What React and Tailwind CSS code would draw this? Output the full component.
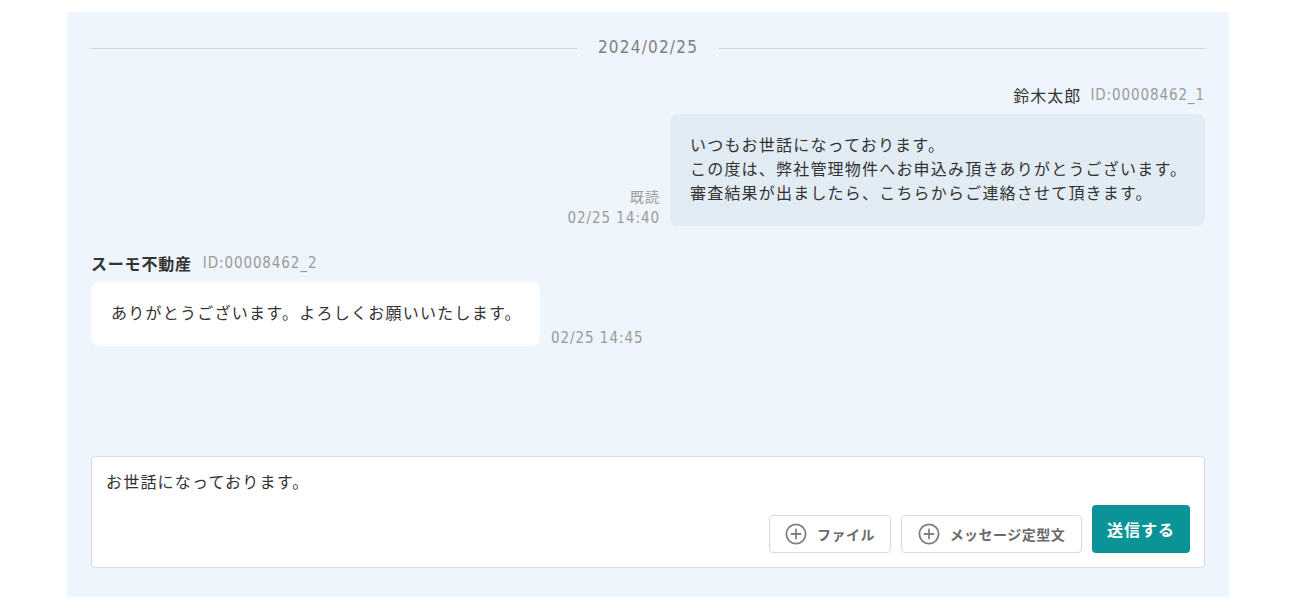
import React from 'react';

const PlusCircle = () => (
  <svg width="22" height="22" viewBox="0 0 22 22" fill="none" stroke="#808080" strokeWidth="1.8">
    <circle cx="11" cy="11" r="9.6" />
    <path d="M11 6.5v9M6.5 11h9" strokeLinecap="round" />
  </svg>
);

const num = "font-['DejaVu_Sans_Condensed',sans-serif]";

const App = () => {
  return (
    <div className="w-full h-[614px] bg-white pl-[67px] pt-[12px] font-['Noto_Sans_CJK_JP','Noto_Sans',sans-serif]">
      <div className="w-[1162px] h-[585px] bg-[#eff5fc] px-6 pt-[25px] pb-[29px] flex flex-col">
        {/* date divider */}
        <div className="flex items-center h-[22px]">
          <div className="flex-1 h-px bg-[#cdd5dd]" />
          <span className={`px-[21px] text-[17px] tracking-[1.2px] text-[#808080] ${num}`}>2024/02/25</span>
          <div className="flex-1 h-px bg-[#cdd5dd]" />
        </div>

        <div className="flex-1">
          {/* own message */}
          <div className="mt-[26px] flex justify-end items-center gap-[9px] h-5">
            <span className="text-[16px] tracking-[1px] text-[#333]">鈴木太郎</span>
            <span className={`text-[15px] tracking-[0.9px] text-[#9a9a9a] ${num}`}>ID:00008462_1</span>
          </div>
          <div className="mt-[9px] flex justify-end items-end gap-[10px]">
            <div className="text-right text-[14px] leading-[20px] text-[#9a9a9a]">
              <div className="tracking-[1px]">既読</div>
              <div className={`${num} text-[15px] tracking-[0.95px] leading-[16px] mt-[4px]`}>02/25 14:40</div>
            </div>
            <div className="w-[535px] bg-[#e2ecf5] rounded-lg pl-5 pr-2 pt-[18px] pb-[22px] text-[16px] tracking-[1.2px] leading-6 text-[#333] whitespace-nowrap">
              <div>いつもお世話になっております。</div>
              <div>この度は、弊社管理物件へお申込み頂きありがとうございます。</div>
              <div>審査結果が出ましたら、こちらからご連絡させて頂きます。</div>
            </div>
          </div>

          {/* partner message */}
          <div className="mt-[27px] flex items-center gap-[11px] h-5">
            <span className="text-[16px] tracking-[0.8px] font-bold text-[#333]">スーモ不動産</span>
            <span className={`text-[15px] tracking-[0.9px] text-[#9a9a9a] ${num}`}>ID:00008462_2</span>
          </div>
          <div className="mt-[9px] flex items-end gap-[11px]">
            <div className="w-[449px] bg-white rounded-lg pl-5 pr-2 pt-[18px] pb-[22px] text-[16px] tracking-[1.25px] leading-6 text-[#333] whitespace-nowrap">
              ありがとうございます。よろしくお願いいたします。
            </div>
            <div className={`text-[15px] tracking-[0.95px] leading-[16px] text-[#9a9a9a] ${num}`}>02/25 14:45</div>
          </div>
        </div>

        {/* input */}
        <div className="h-[112px] bg-white border border-[#d3dbe3] rounded flex flex-col pl-[14px] pr-[14px] pt-[13px] pb-[14px]">
          <div className="flex-1 text-[16px] tracking-[1.2px] leading-[22px] text-[#333]">お世話になっております。</div>
          <div className="flex justify-end items-end gap-[10px]">
            <button className="w-[122px] h-[38px] border border-[#d3dbe3] rounded-sm bg-white flex items-center justify-center gap-[10px] text-[14px] tracking-[0.5px] font-bold text-[#6b6b6b]">
              <PlusCircle />
              ファイル
            </button>
            <button className="w-[181px] h-[38px] border border-[#d3dbe3] rounded-sm bg-white flex items-center justify-center gap-[10px] text-[14px] tracking-[0.5px] font-bold text-[#6b6b6b]">
              <PlusCircle />
              メッセージ定型文
            </button>
            <button className="w-[98px] h-[48px] rounded bg-[#0b9497] text-white text-[16px] tracking-[1px] font-bold">
              送信する
            </button>
          </div>
        </div>
      </div>
    </div>
  );
};

export default App;
